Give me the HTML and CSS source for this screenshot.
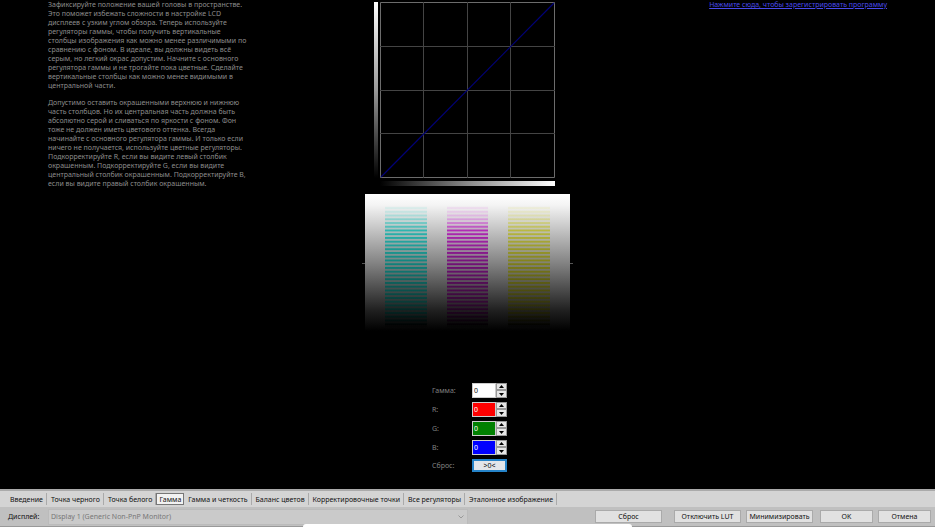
FILE: index.html
```
<!DOCTYPE html>
<html lang="ru">
<head>
<meta charset="utf-8">
<title>Гамма</title>
<link rel="stylesheet" href="styles.css">
</head>
<body>
<main class="stage">
  <section class="help">
    <p>Зафиксируйте положение вашей головы в пространстве.<br>Это поможет избежать сложности в настройке LCD<br>дисплеев с узким углом обзора. Теперь используйте<br>регуляторы гаммы, чтобы получить вертикальные<br>столбцы изображения как можно менее различимыми по<br>сравнению с фоном. В идеале, вы должны видеть всё<br>серым, но легкий окрас допустим. Начните с основного<br>регулятора гаммы и не трогайте пока цветные. Сделайте<br>вертикальные столбцы как можно менее видимыми в<br>центральной части.</p>
    <p>Допустимо оставить окрашенными верхнюю и нижнюю<br>часть столбцов. Но их центральная часть должна быть<br>абсолютно серой и сливаться по яркости с фоном. Фон<br>тоже не должен иметь цветового оттенка. Всегда<br>начинайте с основного регулятора гаммы. И только если<br>ничего не получается, используйте цветные регуляторы.<br>Подкорректируйте R, если вы видите левый столбик<br>окрашенным. Подкорректируйте G, если вы видите<br>центральный столбик окрашенным. Подкорректируйте B,<br>если вы видите правый столбик окрашенным.</p>
  </section>

  <section class="center">
    <div class="curve">
      <div class="ramp-y"></div>
      <svg class="graph" viewBox="0 0 175 176" width="175" height="176" aria-hidden="true">
        <path d="M.5 .5H174.500V175.500H.5Z" fill="none" stroke="#6c6c6c"/>
        <path d="M43.500 0V176M87.500 0V176M130.500 0V176M0 44.500H175M0 88.500H175M0 131.500H175" stroke="#444" fill="none"/>
        <path d="M1 175L174 1" stroke="#000078" stroke-width="1.200"/>
      </svg>
      <div class="ramp-x"></div>
    </div>

    <svg class="pattern" viewBox="0 0 213 137" width="213" height="137" aria-hidden="true">
      <defs>
        <linearGradient id="bg" x1="0" y1="0" x2="0" y2="1">
          <stop offset="0" stop-color="#fff"/><stop offset=".08" stop-color="#f4f4f4"/><stop offset=".5" stop-color="#848484"/><stop offset=".85" stop-color="#202020"/><stop offset="1" stop-color="#000"/>
        </linearGradient>
        <linearGradient id="cy" gradientUnits="userSpaceOnUse" x1="0" y1="10" x2="0" y2="132">
          <stop offset="0" stop-color="#c8f0ec" stop-opacity=".2"/><stop offset=".12" stop-color="#80d0cc" stop-opacity=".8"/><stop offset=".22" stop-color="#2cb4ae"/><stop offset=".5" stop-color="#10807a"/><stop offset=".8" stop-color="#083c38"/><stop offset="1" stop-color="#000"/>
        </linearGradient>
        <linearGradient id="mg" gradientUnits="userSpaceOnUse" x1="0" y1="10" x2="0" y2="132">
          <stop offset="0" stop-color="#f0c8f0" stop-opacity=".2"/><stop offset=".12" stop-color="#d898dc" stop-opacity=".8"/><stop offset=".22" stop-color="#b028b4"/><stop offset=".5" stop-color="#701074"/><stop offset=".8" stop-color="#340834"/><stop offset="1" stop-color="#000"/>
        </linearGradient>
        <linearGradient id="ye" gradientUnits="userSpaceOnUse" x1="0" y1="10" x2="0" y2="132">
          <stop offset="0" stop-color="#f0f0c0" stop-opacity=".2"/><stop offset=".12" stop-color="#d4d490" stop-opacity=".8"/><stop offset=".22" stop-color="#b8b840"/><stop offset=".5" stop-color="#7c7c18"/><stop offset=".8" stop-color="#38380c"/><stop offset="1" stop-color="#000"/>
        </linearGradient>
        <pattern id="lines" patternUnits="userSpaceOnUse" width="213" height="3.750" y="13">
          <rect width="213" height="3.750" fill="#fff" fill-opacity=".16"/><rect width="213" height="1.900" fill="#fff"/>
        </pattern>
        <mask id="stripes" maskUnits="userSpaceOnUse" x="0" y="12" width="213" height="121" style="mask-type: alpha">
          <rect y="12" width="213" height="121" fill="url(#lines)"/>
        </mask>
      </defs>
      <path d="M1 69.500H212" stroke="#555"/>
      <rect x="4" width="205" height="137" fill="url(#bg)"/>
      <g mask="url(#stripes)">
        <rect x="24" y="12" width="42" height="121" fill="url(#cy)"/>
        <rect x="86" y="12" width="41" height="121" fill="url(#mg)"/>
        <rect x="147" y="12" width="42" height="121" fill="url(#ye)"/>
      </g>
    </svg>

    <form class="controls">
      <label for="gamma">Гамма:</label>
      <div class="spin"><input id="gamma" class="white" value="0"><button type="button" aria-label="Гамма больше"><svg viewBox="0 0 5 3"><path d="M0 3L2.500 0L5 3Z"/></svg></button><button type="button" aria-label="Гамма меньше"><svg viewBox="0 0 5 3"><path d="M0 0L2.500 3L5 0Z"/></svg></button></div>
      <label for="r">R:</label>
      <div class="spin"><input id="r" class="red" value="0"><button type="button" aria-label="R больше"><svg viewBox="0 0 5 3"><path d="M0 3L2.500 0L5 3Z"/></svg></button><button type="button" aria-label="R меньше"><svg viewBox="0 0 5 3"><path d="M0 0L2.500 3L5 0Z"/></svg></button></div>
      <label for="g">G:</label>
      <div class="spin"><input id="g" class="green" value="0"><button type="button" aria-label="G больше"><svg viewBox="0 0 5 3"><path d="M0 3L2.500 0L5 3Z"/></svg></button><button type="button" aria-label="G меньше"><svg viewBox="0 0 5 3"><path d="M0 0L2.500 3L5 0Z"/></svg></button></div>
      <label for="b">B:</label>
      <div class="spin"><input id="b" class="blue" value="0"><button type="button" aria-label="B больше"><svg viewBox="0 0 5 3"><path d="M0 3L2.500 0L5 3Z"/></svg></button><button type="button" aria-label="B меньше"><svg viewBox="0 0 5 3"><path d="M0 0L2.500 3L5 0Z"/></svg></button></div>
      <label for="zero">Сброс:</label>
      <button type="button" id="zero" class="zero">&gt;0&lt;</button>
    </form>
  </section>

  <div class="register"><a href="#">Нажмите сюда, чтобы зарегистрировать программу</a></div>
</main>

<footer class="panel">
  <nav class="tabs">
    <button type="button">Введение</button>
    <button type="button">Точка черного</button>
    <button type="button">Точка белого</button>
    <button type="button" class="active">Гамма</button>
    <button type="button">Гамма и четкость</button>
    <button type="button">Баланс цветов</button>
    <button type="button">Корректировочные точки</button>
    <button type="button">Все регуляторы</button>
    <button type="button">Эталонное изображение</button>
  </nav>
  <div class="actions">
    <label for="display">Дисплей:</label>
    <div class="combo">
      <select id="display" disabled><option>Display 1 (Generic Non-PnP Monitor)</option></select>
      <svg viewBox="0 0 6 4" aria-hidden="true"><path d="M.5 .5L3 3L5.500 .5" fill="none" stroke="#999"/></svg>
    </div>
    <div class="buttons">
      <button type="button" class="wide reset">Сброс</button>
      <button type="button" class="wide">Отключить LUT</button>
      <button type="button" class="wide">Минимизировать</button>
      <button type="button" class="ok">OK</button>
      <button type="button">Отмена</button>
    </div>
  </div>
  <div class="sheet"></div>
</footer>
</body>
</html>
```

FILE: styles.css
```
* { box-sizing: border-box; }

body {
  margin: 0;
  min-height: 100vh;
  display: flex;
  flex-direction: column;
  background: #000;
  color: #8c8c8c;
  font: 7px/9px "Noto Sans", "DejaVu Sans", sans-serif;
}

button, input, select { font: inherit; color: #111; margin: 0; padding: 0; border-radius: 0; }

.stage {
  flex: 1;
  display: grid;
  grid-template-columns: 1fr auto 1fr;
  align-items: start;
  padding: 0 48px;
}

.help { white-space: nowrap; }
.help p { margin: 0 0 8px; }

.center { display: flex; flex-direction: column; align-items: center; }

.curve {
  display: grid;
  grid-template-columns: 4px 175px;
  gap: 3px 2px;
  padding: 2px 6px 0 0;
}
.ramp-y { background: linear-gradient(#fff, #999 50%, #000); }
.ramp-x { grid-column: 2; height: 5px; background: linear-gradient(90deg, #000, #888 50%, #fff); }
.graph, .pattern { display: block; }
.pattern { margin-top: 8px; }

.controls {
  display: grid;
  grid-template-columns: 40px 35px;
  row-gap: 4px;
  align-items: center;
  margin-top: 52px;
  padding-left: 4px;
}
.controls label { color: #808080; }

.spin {
  display: grid;
  grid-template-columns: 24px 11px;
  grid-template-rows: 7px 8px;
}
.spin input {
  grid-row: span 2;
  width: 100%;
  height: 15px;
  border: 1px solid #ccc;
  padding-left: 1px;
}
.spin button {
  display: flex;
  align-items: center;
  justify-content: center;
  border: 1px solid #999;
  background: #e6e6e6;
}
.spin svg { width: 5px; height: 3px; }
.spin .white { background: #fff; }
.spin .red { background: #f00; color: #fff; }
.spin .green { background: #008000; color: #fff; }
.spin .blue { background: #00f; color: #fff; }
.zero {
  height: 13px;
  border: 2px solid #2583c8;
  background: #e2e6ea;
  display: flex;
  align-items: center;
  justify-content: center;
}

.register { text-align: right; white-space: nowrap; }
.register a { color: #4a4aec; }

.panel { position: relative; background: #d4d4d4; color: #111; border-top: 1px solid #aaa; }

.tabs {
  display: flex;
  align-items: center;
  height: 17px;
  padding: 0 6px;
  border-top: 1px solid #aaa;
}
.tabs button {
  height: 12px;
  padding: 0 3px 0 4px;
  border: 0;
  border-right: 1px solid #aaa;
  background: none;
  white-space: nowrap;
}
.tabs .active { padding: 0 2px; border: 1px solid #777; background: #f2f2f2; }

.actions {
  display: flex;
  align-items: center;
  height: 20px;
  padding: 0 4px 0 8px;
  background: #c0c0c0;
  border-bottom: 1px solid #999;
}
.actions label { width: 40px; }
.combo { position: relative; flex: 1; background: #cacaca; border: 1px solid #bbb; }
.combo select {
  display: block;
  width: 100%;
  height: 14px;
  padding-left: 2px;
  border: 0;
  appearance: none;
  background: none;
  color: #777;
  opacity: 1;
}
.combo svg { position: absolute; right: 3px; top: 5px; width: 6px; height: 4px; }

.buttons { display: flex; gap: 5px; margin-left: 127px; }
.buttons button { width: 53px; height: 13px; border: 1px solid #aaa; background: #e1e1e1; white-space: nowrap; }
.buttons .wide { width: 67px; }
.buttons .reset { margin-right: 7px; }
.buttons .ok { margin-left: 2px; }

.sheet {
  position: absolute;
  left: 32.4%;
  right: 32.4%;
  bottom: 0;
  height: 3px;
  background: #fff;
  border-radius: 3px 3px 0 0;
}
```
